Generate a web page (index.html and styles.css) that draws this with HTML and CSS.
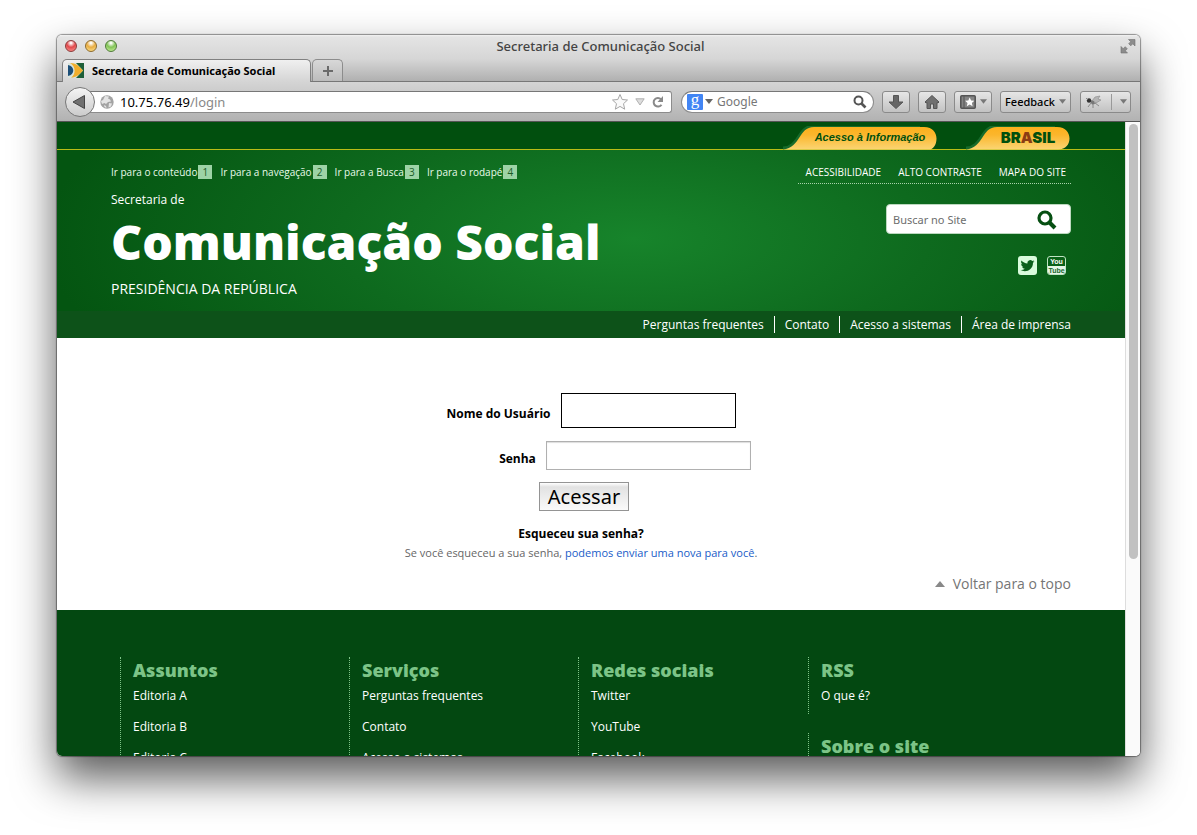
FILE: index.html
```html
<!DOCTYPE html>
<html lang="pt-BR">
<head>
<meta charset="utf-8">
<title>Secretaria de Comunicação Social</title>
<link rel="stylesheet" href="styles.css">
</head>
<body>
<div class="window">
  <header class="chrome">
    <div class="titlebar">
      <div class="lights">
        <button class="light light-red" aria-label="Fechar"></button>
        <button class="light light-amber" aria-label="Minimizar"></button>
        <button class="light light-green" aria-label="Ampliar"></button>
      </div>
      <span class="window-title">Secretaria de Comunicação Social</span>
      <button class="plain expand" aria-label="Tela cheia">
        <svg width="16" height="16" viewBox="0 0 16 16" fill="#8c8c8c" stroke="#6e6e6e" stroke-width=".6"><path d="M8.500 1.500H15V8l-2.200-2.200-2 2L8.700 5.700l2-2zM7.500 15H1V8.500l2.200 2.200 2-2 2.100 2.100-2 2z"/></svg>
      </button>
    </div>
    <div class="tabs">
      <div class="tab">
        <svg width="16" height="15" viewBox="0 0 16 15"><rect width="16" height="15" fill="#1d5f38"/><path d="M0 0h8l7 7.500L8 15H0z" fill="#d9e4dc"/><path d="M2 0c6 0 9 3 13 7.500C11 12 8 14.500 3 14.500c5-3 5-11-1-14.500z" fill="#f0ae2c"/><path d="M0 2c7 1 7 10 0 11z" fill="#1c4f78"/></svg>
        <span>Secretaria de Comunicação Social</span>
      </div>
      <button class="new-tab" aria-label="Nova aba"><svg width="12" height="12" viewBox="0 0 12 12"><path d="M6 1v10M1 6h10" stroke="#6a6a6a" stroke-width="2"/></svg></button>
    </div>
    <div class="toolbar">
      <button class="back" aria-label="Voltar"><svg width="14" height="16" viewBox="0 0 14 16"><path d="M1 8 12.500 1.500v13z" fill="#707070" stroke="#444"/></svg></button>
      <div class="address">
        <svg width="14" height="14" viewBox="0 0 14 14"><circle cx="7" cy="7" r="6.700" fill="#a3a3a3"/><path d="M5 1l4 .5-1 2 2 1 1 2-3 .5-2 2-1.500-1L2 9 1 6l2-1zM9 8l3 .5-1 3-2.500 1zM4 10l2 1 .5 2-2-1z" fill="#e4e4e4"/></svg>
        <span class="url">10.75.76.49<span class="url-path">/login</span></span>
        <svg width="18" height="18" viewBox="0 0 18 18"><path d="m9 1.500 2.200 5 5.300.5-4 3.700 1.200 5.500L9 13.400l-4.700 2.800 1.200-5.500-4-3.700 5.300-.5z" fill="#fafafa" stroke="#a6a6a6"/></svg>
        <svg width="10" height="8" viewBox="0 0 10 8"><path d="M.8.800h8.400L5 7z" fill="#ddd" stroke="#b0b0b0"/></svg>
        <svg width="14" height="14" viewBox="0 0 14 14"><path d="M10.500 9.700A4.300 4.300 0 1 1 10 4.200" fill="none" stroke="#8a8a8a" stroke-width="2"/><path d="M12 1v6H6.500z" fill="#8a8a8a"/></svg>
      </div>
      <div class="search">
        <span class="google-mark" aria-hidden="true">g</span>
        <svg width="8" height="5" viewBox="0 0 8 5"><path d="M0 0h8L4 5z" fill="#666"/></svg>
        <input class="search-input" type="text" placeholder="Google" aria-label="Pesquisa no Google">
        <svg width="14" height="14" viewBox="0 0 14 14" fill="none" stroke="#555"><circle cx="5.500" cy="5.500" r="4" stroke-width="2"/><path d="m8.500 8.500 4 4" stroke-width="2.600"/></svg>
      </div>
      <button class="tool tool-icon" aria-label="Downloads"><svg width="16" height="16" viewBox="0 0 16 16"><path d="M5.500 1.500h5V8H15l-7 6.500L1 8h4.500z" fill="#666" stroke="#555"/></svg></button>
      <button class="tool tool-icon" aria-label="Página inicial"><svg width="16" height="16" viewBox="0 0 16 16"><path d="m8 1.500 7 6.500-1 1-1-.5V14.500H9.500V10h-3v4.500H3V8.500L2 9 1 8z" fill="#707070" stroke="#555"/></svg></button>
      <button class="tool tool-menu" aria-label="Favoritos"><svg width="16" height="14" viewBox="0 0 16 14"><rect x=".8" y=".8" width="14.400" height="12.400" rx="1" fill="#858585" stroke="#555" stroke-width="1.600"/><path d="M4 1v12" stroke="#555"/><path d="m9.700 2.500 1.400 3 3.200.3-2.400 2.100.7 3.300-2.900-1.700-2.900 1.700.7-3.300L5.100 5.800l3.200-.3z" fill="#fff"/></svg><svg width="7" height="5" viewBox="0 0 8 5"><path d="M0 0h8L4 5z" fill="#777"/></svg></button>
      <button class="tool tool-menu feedback">Feedback<svg width="7" height="5" viewBox="0 0 8 5"><path d="M0 0h8L4 5z" fill="#777"/></svg></button>
      <button class="tool tool-split" aria-label="Firebug"><svg width="18" height="14" viewBox="0 0 18 14"><path d="M7 6 10 2l5-1-2 3 3 1-5 3z" fill="#b5b5b5" stroke="#888" stroke-width=".6"/><path d="M4 5l5 1 1 3-3 .5z" fill="#777"/><circle cx="4" cy="5.500" r="2.200" fill="#333"/><path d="M6 8 3 12M8 9v4M10 8l4 3M3 5 1 3" stroke="#777" stroke-width=".8"/></svg><span class="split"></span><svg width="7" height="5" viewBox="0 0 8 5"><path d="M0 0h8L4 5z" fill="#777"/></svg></button>
    </div>
  </header>

  <div class="viewport">
    <div class="page">
      <div class="gov-bar">
        <div class="wrap gov-tabs">
          <a class="gov-tab gov-info" href="#"><svg class="gov-shape" viewBox="0 0 154 24"><path d="M0 22C16 22 15 0 31 0h106" fill="none" stroke="#176b2b" stroke-width="3"/><path d="M0 23.500C18 22 15 1 31 1h110c9 0 12.500 6 12.500 11.500 0 5-2 9-6 11z" fill="url(#gold)"/></svg><span>Acesso à Informação</span></a>
          <a class="gov-tab gov-brasil" href="#"><svg class="gov-shape" viewBox="0 0 104 24"><defs><linearGradient id="gold" x1="0" y1="0" x2="0" y2="1"><stop offset="0" stop-color="#fcb01c"/><stop offset=".35" stop-color="#fbb62c"/><stop offset="1" stop-color="#fbd573"/></linearGradient></defs><path d="M0 22C16 22 15 0 31 0h58" fill="none" stroke="#176b2b" stroke-width="3"/><path d="M0 23.500C18 22 15 1 31 1h60c9 0 12.500 6 12.500 11.500S100 23.500 92 23.500z" fill="url(#gold)"/></svg><span>BR<span class="brasil-a">A</span>SIL</span></a>
        </div>
      </div>
      <div class="site-header">
        <div class="wrap header-grid">
          <div class="brand">
            <nav class="skips">
              <a href="#conteudo">Ir para o conteúdo<span>1</span></a>
              <a href="#navegacao">Ir para a navegação<span>2</span></a>
              <a href="#busca">Ir para a Busca<span>3</span></a>
              <a href="#rodape">Ir para o rodapé<span>4</span></a>
            </nav>
            <p class="brand-pre">Secretaria de</p>
            <h1 class="brand-name">Comunicação Social</h1>
            <p class="brand-post">PRESIDÊNCIA DA REPÚBLICA</p>
          </div>
          <div class="tools">
            <nav class="access">
              <a href="#">ACESSIBILIDADE</a><a href="#">ALTO CONTRASTE</a><a href="#">MAPA DO SITE</a>
            </nav>
            <form class="site-search">
              <input id="busca" type="text" placeholder="Buscar no Site" aria-label="Buscar no Site">
              <button class="plain" type="button" aria-label="Buscar"><svg width="20" height="20" viewBox="0 0 20 20" fill="none" stroke="#064f12"><circle cx="8" cy="8" r="6" stroke-width="3.200"/><path d="m12.500 12.500 5.500 5.500" stroke-width="4"/></svg></button>
            </form>
            <div class="social">
              <a href="#" aria-label="Twitter"><svg width="19" height="19" viewBox="0 0 19 19"><rect width="19" height="19" rx="3" fill="#d9fbdc"/><path d="M16.500 5.200c-.5.200-1 .4-1.600.5.600-.4 1-.9 1.200-1.500-.5.300-1.100.5-1.800.7a2.900 2.900 0 0 0-4.900 2.600C7 7.400 5 6.200 3.500 4.500c-.8 1.400-.4 3 .9 3.800-.5 0-.9-.1-1.300-.3 0 1.300 1 2.500 2.300 2.800-.4.100-.9.100-1.300 0 .4 1.200 1.400 1.900 2.700 2a5.800 5.800 0 0 1-4.200 1.200c4.800 2.900 12.400.2 12.400-7.300.6-.4 1.100-.9 1.500-1.500z" fill="#0b5f1b"/></svg></a>
              <a class="youtube" href="#"><span>You</span><span class="tube">Tube</span></a>
            </div>
          </div>
        </div>
      </div>
      <nav class="service-bar" id="navegacao">
        <div class="wrap services">
          <a href="#">Perguntas frequentes</a><a href="#">Contato</a><a href="#">Acesso a sistemas</a><a href="#">Área de imprensa</a>
        </div>
      </nav>
      <main class="wrap main" id="conteudo">
        <form class="login">
          <div class="field field-user"><label for="user">Nome do Usuário</label><input id="user" type="text"></div>
          <div class="field field-pass"><label for="pass">Senha</label><input id="pass" type="password"></div>
          <button class="submit" type="button">Acessar</button>
        </form>
        <div class="forgot">
          <h2>Esqueceu sua senha?</h2>
          <p>Se você esqueceu a sua senha, <a href="#">podemos enviar uma nova para você</a>.</p>
        </div>
        <a class="to-top" href="#"><svg width="10" height="6" viewBox="0 0 10 6"><path d="M5 0l5 6H0z" fill="#888"/></svg>Voltar para o topo</a>
      </main>
      <footer class="site-footer" id="rodape">
        <div class="wrap foot-grid">
          <section><h2>Assuntos</h2><a href="#">Editoria A</a><a href="#">Editoria B</a><a href="#">Editoria C</a></section>
          <section><h2>Serviços</h2><a href="#">Perguntas frequentes</a><a href="#">Contato</a><a href="#">Acesso a sistemas</a></section>
          <section><h2>Redes sociais</h2><a href="#">Twitter</a><a href="#">YouTube</a><a href="#">Facebook</a></section>
          <div class="foot-stack">
            <section><h2>RSS</h2><a href="#">O que é?</a></section>
            <section><h2>Sobre o site</h2></section>
          </div>
        </div>
      </footer>
    </div>
    <div class="scrollbar"><div class="thumb"></div></div>
  </div>
</div>
</body>
</html>
```
FILE: styles.css
```css
* { box-sizing: border-box; }

body {
  margin: 0;
  height: 100vh;
  padding: 35px 57px 79px;
  overflow: hidden;
  background: #fff;
  font-family: "Open Sans", sans-serif;
}
a { color: inherit; text-decoration: none; }
p, h1, h2 { margin: 0; }
svg { display: block; flex: none; }
button, input { font: inherit; }
.plain { border: 0; padding: 0; background: none; }

.window {
  display: flex;
  flex-direction: column;
  height: 100%;
  border-radius: 5px;
  overflow: hidden;
  box-shadow: 0 0 1px 1px rgba(0, 0, 0, .4), 0 22px 44px rgba(0, 0, 0, .65);
}

/* Browser chrome */
.chrome { font-family: "Noto Sans", sans-serif; flex: none; }
.titlebar {
  display: grid;
  grid-template-columns: 1fr auto 1fr;
  align-items: center;
  height: 24px;
  padding: 0 4px 2px 8px;
  background: linear-gradient(#f2f2f2, #e4e4e4 2px, #d6d6d6);
}
.lights { display: flex; gap: 8px; }
.light {
  width: 12px;
  height: 12px;
  padding: 0;
  border: 1px solid #777;
  border-radius: 50%;
}
.light-red { border-color: #8b3a3a; background: radial-gradient(circle at 50% 20%, #fff 5%, #e2494c 45%, #ff9a94); }
.light-amber { border-color: #8d6a2c; background: radial-gradient(circle at 50% 20%, #fff 5%, #e9ad42 45%, #ffe998); }
.light-green { border-color: #4f7a39; background: radial-gradient(circle at 50% 20%, #fff 5%, #82c457 45%, #d2f7a4); }
.window-title { font-size: 13px; font-weight: 500; color: #444; }
.expand { justify-self: end; }

.tabs {
  display: flex;
  align-items: flex-end;
  height: 23px;
  padding-left: 5px;
  border-bottom: 1px solid #777;
  background: linear-gradient(#d6d6d6, #b0b0b0);
}
.tab {
  display: flex;
  align-items: center;
  gap: 8px;
  width: 249px;
  height: 23px;
  margin-bottom: -1px;
  padding: 0 0 2px 5px;
  border: 1px solid #808080;
  border-bottom: 0;
  border-radius: 5px 5px 0 0;
  background: linear-gradient(#f0f0f0, #d4d4d4);
  font-size: 11px;
  font-weight: 700;
  color: #000;
}
.new-tab {
  display: grid;
  place-items: center;
  width: 31px;
  height: 22px;
  margin-left: 1px;
  padding: 0;
  border: 1px solid #8c8c8c;
  border-bottom: 0;
  border-radius: 5px 5px 0 0;
  background: linear-gradient(#d8d8d8, #bcbcbc);
}

.toolbar {
  display: flex;
  align-items: center;
  height: 40px;
  padding: 0 9px 0 8px;
  border-bottom: 1px solid #555;
  background: linear-gradient(#d4d4d4, #b2b2b2);
}
.back {
  z-index: 1;
  display: grid;
  place-items: center;
  width: 30px;
  height: 30px;
  padding: 0 3px 0 0;
  border: 1px solid #777;
  border-radius: 50%;
  background: linear-gradient(#f4f4f4, #cbcbcb);
}
.address, .search {
  display: flex;
  align-items: center;
  height: 22px;
  border: 1px solid #8c8c8c;
  border-top-color: #777;
  background: #fff;
}
.address {
  flex: 1;
  gap: 6px;
  margin-left: -8px;
  padding: 0 6px 0 13px;
  border-left: 0;
  border-radius: 0 3px 3px 0;
}
.url { flex: 1; font-size: 13px; line-height: 20px; color: #000; }
.url-path { color: #888; }
.search {
  width: 193px;
  margin: 0 8px 0 9px;
  padding: 0 6px 0 5px;
  border-radius: 11px;
}
.google-mark {
  width: 16px;
  height: 16px;
  margin-right: 2px;
  border-radius: 1px;
  background: #4285f4;
  color: #fff;
  font: 17px/12px "Liberation Serif", serif;
  text-align: center;
}
.search-input {
  flex: 1;
  min-width: 0;
  padding: 0 4px;
  border: 0;
  outline: 0;
  background: none;
  font-size: 12px;
}
.search-input::placeholder { color: #777; opacity: 1; }
.tool {
  display: flex;
  align-items: center;
  justify-content: center;
  height: 22px;
  padding: 0;
  border: 1px solid #8a8a8a;
  border-radius: 3px;
  background: linear-gradient(#e6e6e6, #c2c2c2);
  font-size: 11px;
  color: #000;
}
.tool-icon { width: 28px; margin-right: 8px; }
.tool-menu { gap: 4px; width: 38px; margin-right: 8px; }
.tool-menu.feedback { width: 71px; margin-right: 9px; font-weight: 500; }
.tool-split { gap: 8px; width: 51px; }
.split { width: 1px; height: 16px; background: #999; }

/* Page area */
.viewport { display: flex; flex: 1; min-height: 0; background: #fff; }
.page { flex: 1; min-width: 0; overflow: hidden; }
.wrap { max-width: 960px; margin: 0 auto; }
.scrollbar { flex: none; width: 15px; padding: 2px 3px; border-left: 1px solid #ddd; background: #fafafa; }
.thumb { width: 9px; height: 69%; border-radius: 5px; background: #c1c1c1; }

.gov-bar { height: 28px; border-bottom: 1px solid #b9bc16; background: #014f0e; color: #014f0e; }
.gov-tabs { display: flex; justify-content: flex-end; gap: 29px; height: 28px; padding: 4px 1px 0 0; }
.gov-tab { position: relative; height: 24px; text-align: center; }
.gov-shape { position: absolute; inset: 0; width: 100%; height: 100%; }
.gov-tab > span { position: relative; }
.gov-info { width: 154px; padding-left: 20px; font: italic 700 11px/23px "Liberation Sans", sans-serif; }
.gov-brasil { width: 104px; padding-left: 20px; font: 900 15px/24px Inter, sans-serif; }
.brasil-a { color: #8b3d14; }

.site-header {
  height: 161px;
  background: radial-gradient(ellipse 590px 220px at 54% 55%, #17842b, #0e6a1e 50%, #045511 100%);
  color: #fff;
}
.header-grid { display: flex; justify-content: space-between; }
.skips { display: flex; gap: 8px; padding-top: 15px; font-size: 10px; line-height: 14px; color: #e9fbea; }
.skips a { display: flex; gap: 1px; }
.skips span { width: 14px; background: #9dd3a6; color: #1a5c26; text-align: center; }
.brand-pre { margin-top: 12px; font-size: 12px; line-height: 18px; font-weight: 500; }
.brand-name { font-size: 48px; line-height: 66px; font-weight: 800; }
.brand-post { margin-top: 4px; font-size: 14px; line-height: 20px; font-weight: 500; }
.tools { display: flex; flex-direction: column; align-items: flex-end; }
.access { display: flex; gap: 17px; padding: 14px 5px 3px 8px; border-bottom: 1px dotted #a8d3ac; font-size: 10px; line-height: 16px; font-weight: 500; }
.site-search { display: flex; align-items: center; width: 185px; height: 30px; margin-top: 20px; padding: 0 13px 0 6px; border: 1px solid #bcd8bf; border-radius: 4px; background: #fff; }
.site-search input { flex: 1; min-width: 0; padding: 0; border: 0; outline: 0; background: none; font: 11px "Noto Sans", sans-serif; }
.site-search input::placeholder { color: #6d6d6d; opacity: 1; }
.site-search button { padding-top: 2px; }
.social { display: flex; gap: 10px; margin: 22px 5px 0 0; }
.youtube {
  display: block;
  width: 19px;
  height: 19px;
  border: 1px solid #bfe3c3;
  border-radius: 3px;
  overflow: hidden;
  font: 700 7px/9px "Liberation Sans", sans-serif;
  text-align: center;
}
.youtube span { display: block; }
.youtube .tube { height: 9px; background: #e6f5e7; color: #14662a; }

.service-bar { background: #0d5219; color: #fff; }
.services { display: flex; justify-content: flex-end; padding: 5px 0; font-size: 12px; line-height: 17px; font-weight: 500; }
.services a { padding: 0 10px; border-left: 1px solid #fff; }
.services a:first-child { border-left: 0; }
.services a:last-child { padding-right: 0; }

.main { padding-top: 55px; color: #000; }
.login { display: flex; flex-direction: column; align-items: center; }
.field { display: flex; align-items: center; gap: 10px; font-size: 12px; line-height: 18px; font-weight: 700; }
.field label { padding-top: 6px; }
.field input { padding: 2px 6px; background: #fff; }
.field-user input { width: 175px; height: 35px; border: 1px solid #000; }
.field-pass { margin: 13px 0 12px; padding-left: 68px; }
.field-pass input { width: 205px; height: 29px; border: 1px solid #b0b0b0; box-shadow: inset 0 1px 1px #ddd; }
.submit { height: 29px; margin-right: 14px; padding: 0 8px; border: 1px solid #949494; background: linear-gradient(#fff, #e2e2e2 4px, #fafafa); font: 20px/24px "Noto Sans", sans-serif; color: #000; }
.forgot { margin-right: 20px; padding-top: 14px; text-align: center; font-size: 11px; color: #666; }
.forgot h2 { font-size: 12px; line-height: 18px; color: #000; }
.forgot p { line-height: 19px; }
.forgot p a { color: #205cc8; }
.to-top { display: flex; align-items: center; justify-content: flex-end; gap: 8px; padding: 12px 0 16px; font-size: 14px; line-height: 20px; color: #757575; }

.site-footer { height: 400px; padding-top: 47px; background: #034811; color: #fff; }
.foot-grid { display: grid; grid-template-columns: 229px 229px 230px 1fr; padding-left: 9px; }
.foot-grid section { padding-left: 12px; border-left: 1px dotted #7fc488; }
.foot-grid h2 { font-size: 18px; line-height: 27px; font-weight: 800; color: #7cc487; }
.foot-grid a { display: block; height: 30px; margin-bottom: 1px; font-size: 12px; line-height: 24px; font-weight: 500; }
.foot-stack section + section { margin-top: 19px; }
```
